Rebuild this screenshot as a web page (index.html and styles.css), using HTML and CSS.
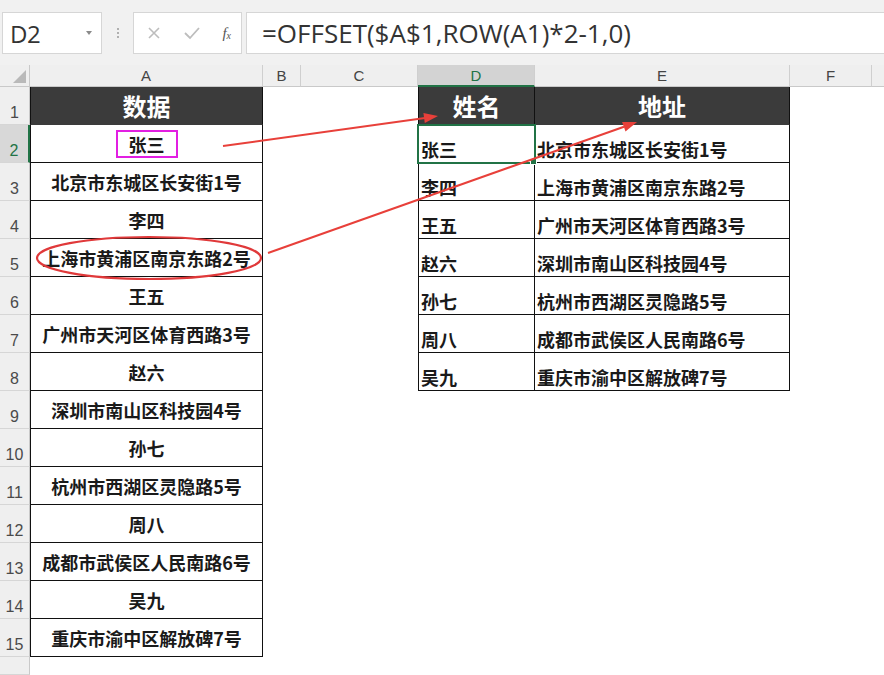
FILE: index.html
```html
<!DOCTYPE html>
<html lang="zh">
<head>
<meta charset="utf-8">
<link rel="stylesheet" href="styles.css">
</head>
<body>
<div class="topbar">
  <div class="namebox"><span class="ref">D2</span><span class="dd"></span></div>
  <div class="grip"><span></span><span></span><span></span></div>
  <div class="fxbox">
    <svg class="ico" width="16" height="16" viewBox="0 0 16 16"><path d="M3 3 L13 13 M13 3 L3 13" stroke="#bdbdbd" stroke-width="1.6" fill="none"/></svg>
    <svg class="ico" width="18" height="16" viewBox="0 0 18 16"><path d="M2 8 L7 13 L16 3" stroke="#bdbdbd" stroke-width="1.8" fill="none"/></svg>
    <span class="fx">f<sub>x</sub></span>
  </div>
  <div class="formula">=OFFSET($A$1,ROW(A1)*2-1,0)</div>
</div>

<div class="sheet">
  <div class="corner"><span class="tri"></span></div>
  <div class="ch">A</div><div class="ch">B</div><div class="ch">C</div><div class="ch sel">D</div><div class="ch">E</div><div class="ch">F</div><div class="ch last"></div>

  <div class="rh">1</div><div class="ta th">数据</div><div class="c"></div><div class="c"></div><div class="td th ctr">姓名</div><div class="te th ctr">地址</div><div class="c"></div><div class="c"></div>
  <div class="rh sel">2</div><div class="ta"><span class="mark">张三</span></div><div class="c"></div><div class="c"></div><div class="td cur">张三<span class="handle"></span></div><div class="te">北京市东城区长安街1号</div><div class="c"></div><div class="c"></div>
  <div class="rh">3</div><div class="ta">北京市东城区长安街1号</div><div class="c"></div><div class="c"></div><div class="td">李四</div><div class="te">上海市黄浦区南京东路2号</div><div class="c"></div><div class="c"></div>
  <div class="rh">4</div><div class="ta">李四</div><div class="c"></div><div class="c"></div><div class="td">王五</div><div class="te">广州市天河区体育西路3号</div><div class="c"></div><div class="c"></div>
  <div class="rh">5</div><div class="ta">上海市黄浦区南京东路2号</div><div class="c"></div><div class="c"></div><div class="td">赵六</div><div class="te">深圳市南山区科技园4号</div><div class="c"></div><div class="c"></div>
  <div class="rh">6</div><div class="ta">王五</div><div class="c"></div><div class="c"></div><div class="td">孙七</div><div class="te">杭州市西湖区灵隐路5号</div><div class="c"></div><div class="c"></div>
  <div class="rh">7</div><div class="ta">广州市天河区体育西路3号</div><div class="c"></div><div class="c"></div><div class="td">周八</div><div class="te">成都市武侯区人民南路6号</div><div class="c"></div><div class="c"></div>
  <div class="rh">8</div><div class="ta">赵六</div><div class="c"></div><div class="c"></div><div class="td">吴九</div><div class="te">重庆市渝中区解放碑7号</div><div class="c"></div><div class="c"></div>
  <div class="rh">9</div><div class="ta">深圳市南山区科技园4号</div><div class="c"></div><div class="c"></div><div class="c"></div><div class="c"></div><div class="c"></div><div class="c"></div>
  <div class="rh">10</div><div class="ta">孙七</div><div class="c"></div><div class="c"></div><div class="c"></div><div class="c"></div><div class="c"></div><div class="c"></div>
  <div class="rh">11</div><div class="ta">杭州市西湖区灵隐路5号</div><div class="c"></div><div class="c"></div><div class="c"></div><div class="c"></div><div class="c"></div><div class="c"></div>
  <div class="rh">12</div><div class="ta">周八</div><div class="c"></div><div class="c"></div><div class="c"></div><div class="c"></div><div class="c"></div><div class="c"></div>
  <div class="rh">13</div><div class="ta">成都市武侯区人民南路6号</div><div class="c"></div><div class="c"></div><div class="c"></div><div class="c"></div><div class="c"></div><div class="c"></div>
  <div class="rh">14</div><div class="ta">吴九</div><div class="c"></div><div class="c"></div><div class="c"></div><div class="c"></div><div class="c"></div><div class="c"></div>
  <div class="rh">15</div><div class="ta">重庆市渝中区解放碑7号</div><div class="c"></div><div class="c"></div><div class="c"></div><div class="c"></div><div class="c"></div><div class="c"></div>
  <div class="rh"></div><div class="c"></div><div class="c"></div><div class="c"></div><div class="c"></div><div class="c"></div><div class="c"></div><div class="c"></div>

  <svg class="annot" width="884" height="610" viewBox="0 65 884 610">
    <ellipse cx="149" cy="258" rx="112" ry="21" fill="none" stroke="#e0393a" stroke-width="2.2"/>
    <line x1="223" y1="146" x2="425" y2="118" stroke="#e8403a" stroke-width="2"/>
    <polygon points="438,116 424.8,122.9 423.4,113" fill="#e8403a"/>
    <line x1="268" y1="253" x2="624" y2="126.7" stroke="#e8403a" stroke-width="2"/>
    <polygon points="637,122 625.5,131.4 622.1,122" fill="#e8403a"/>
  </svg>
</div>
</body>
</html>
```

FILE: styles.css
```css
html, body {
  margin: 0;
  padding: 0;
  background: #ffffff;
}
body {
  width: 884px;
  height: 675px;
  overflow: hidden;
  font-family: "Noto Sans CJK SC", "Noto Sans", sans-serif;
}

/* formula bar */
.topbar {
  height: 65px;
  box-sizing: border-box;
  padding-top: 12px;
  background: #f1f1f1;
  display: flex;
  align-items: flex-start;
}
.namebox {
  margin-left: 2px;
  width: 100px;
  height: 42px;
  box-sizing: border-box;
  background: #fff;
  border: 1px solid #d6d6d6;
  display: flex;
  align-items: center;
  justify-content: space-between;
  padding: 0 7px 0 7px;
}
.ref {
  font-family: "Open Sans", "Liberation Sans", sans-serif;
  font-size: 24px;
  color: #333;
  letter-spacing: -0.5px;
}
.dd {
  width: 0;
  height: 0;
  border-left: 3px solid transparent;
  border-right: 3px solid transparent;
  border-top: 4px solid #8a8a8a;
  margin-right: 2px;
}
.grip {
  width: 31px;
  height: 42px;
  display: flex;
  flex-direction: column;
  align-items: center;
  justify-content: center;
  gap: 2px;
}
.grip span {
  width: 2px;
  height: 2px;
  background: #b0b0b0;
}
.fxbox {
  width: 109px;
  height: 42px;
  box-sizing: border-box;
  background: #fff;
  border: 1px solid #d6d6d6;
  display: flex;
  align-items: center;
  justify-content: space-between;
  padding: 0 10px 0 12px;
}
.ico {
  display: block;
}
.fx {
  font-family: "Liberation Serif", serif;
  font-style: italic;
  font-size: 15px;
  color: #555;
}
.fx sub {
  font-size: 10px;
  vertical-align: -1px;
}
.formula {
  margin-left: 4px;
  flex: 1;
  height: 42px;
  box-sizing: border-box;
  background: #fff;
  border: 1px solid #d6d6d6;
  border-right: none;
  padding-left: 15px;
  font-family: "Open Sans", "Liberation Sans", sans-serif;
  font-size: 26px;
  line-height: 40px;
  color: #333;
  white-space: nowrap;
}

/* sheet grid */
.sheet {
  position: relative;
  display: grid;
  grid-template-columns: 30px 233px 38px 117px 117px 255px 82px 12px;
  grid-template-rows: 22px repeat(15, 38px) 18px;
  font-family: "Noto Sans CJK SC", "Noto Sans", sans-serif;
}
.corner {
  position: relative;
  background: #efefef;
  border-right: 1px solid #c9c9c9;
  border-bottom: 1px solid #c9c9c9;
  box-sizing: border-box;
}
.tri {
  position: absolute;
  right: 3px;
  bottom: 3px;
  width: 0;
  height: 0;
  border-left: 13px solid transparent;
  border-bottom: 13px solid #b9b9b9;
}
.ch {
  background: #efefef;
  border-right: 1px solid #cfcfcf;
  border-bottom: 1px solid #c9c9c9;
  box-sizing: border-box;
  text-align: center;
  font-family: "Liberation Sans", sans-serif;
  font-size: 15px;
  line-height: 22px;
  color: #444;
}
.ch.sel {
  background: #d3d3d3;
  border-bottom: 2px solid #217346;
  color: #217346;
  line-height: 21px;
}
.ch.last {
  border-right: none;
}
.rh {
  background: #efefef;
  border-right: 1px solid #c9c9c9;
  border-bottom: 1px solid #d6d6d6;
  box-sizing: border-box;
  display: flex;
  align-items: flex-end;
  justify-content: center;
  padding-bottom: 2px;
  font-family: "Liberation Sans", sans-serif;
  font-size: 16px;
  color: #4a4a4a;
}
.rh.sel {
  background: #d8d8d8;
  border-right: 2px solid #217346;
  color: #217346;
}
.c {
  background: #fff;
}
.ta, .td, .te {
  box-sizing: border-box;
  background: #fff;
  border-right: 1px solid #111;
  border-bottom: 1px solid #111;
  display: flex;
  align-items: flex-end;
  padding-bottom: 1px;
  font-size: 18px;
  font-weight: 700;
  line-height: 24px;
  color: #1a1a1a;
  white-space: nowrap;
}
.ta {
  border-left: 1px solid #111;
  justify-content: center;
  align-items: center;
  padding-bottom: 0;
}
.td {
  border-left: 1px solid #111;
  padding-left: 2px;
}
.te {
  padding-left: 2px;
}
.th {
  background: #3b3b3b;
  color: #fff;
  font-size: 24px;
  align-items: center;
  padding-bottom: 0;
  border-bottom-color: #3b3b3b;
}
.th.ctr {
  justify-content: center;
  padding-left: 0;
}
.td.cur {
  position: relative;
  z-index: 1;
  outline: 2px solid #217346;
  outline-offset: -1px;
}
.handle {
  position: absolute;
  right: -3px;
  bottom: -3px;
  width: 5px;
  height: 5px;
  background: #217346;
  border: 1px solid #fff;
}
.mark {
  display: inline-block;
  border: 2px solid #e21fe2;
  padding: 0 11px;
  line-height: 24px;
}
.annot {
  position: absolute;
  left: 0;
  top: 0;
  z-index: 2;
  pointer-events: none;
}
```
